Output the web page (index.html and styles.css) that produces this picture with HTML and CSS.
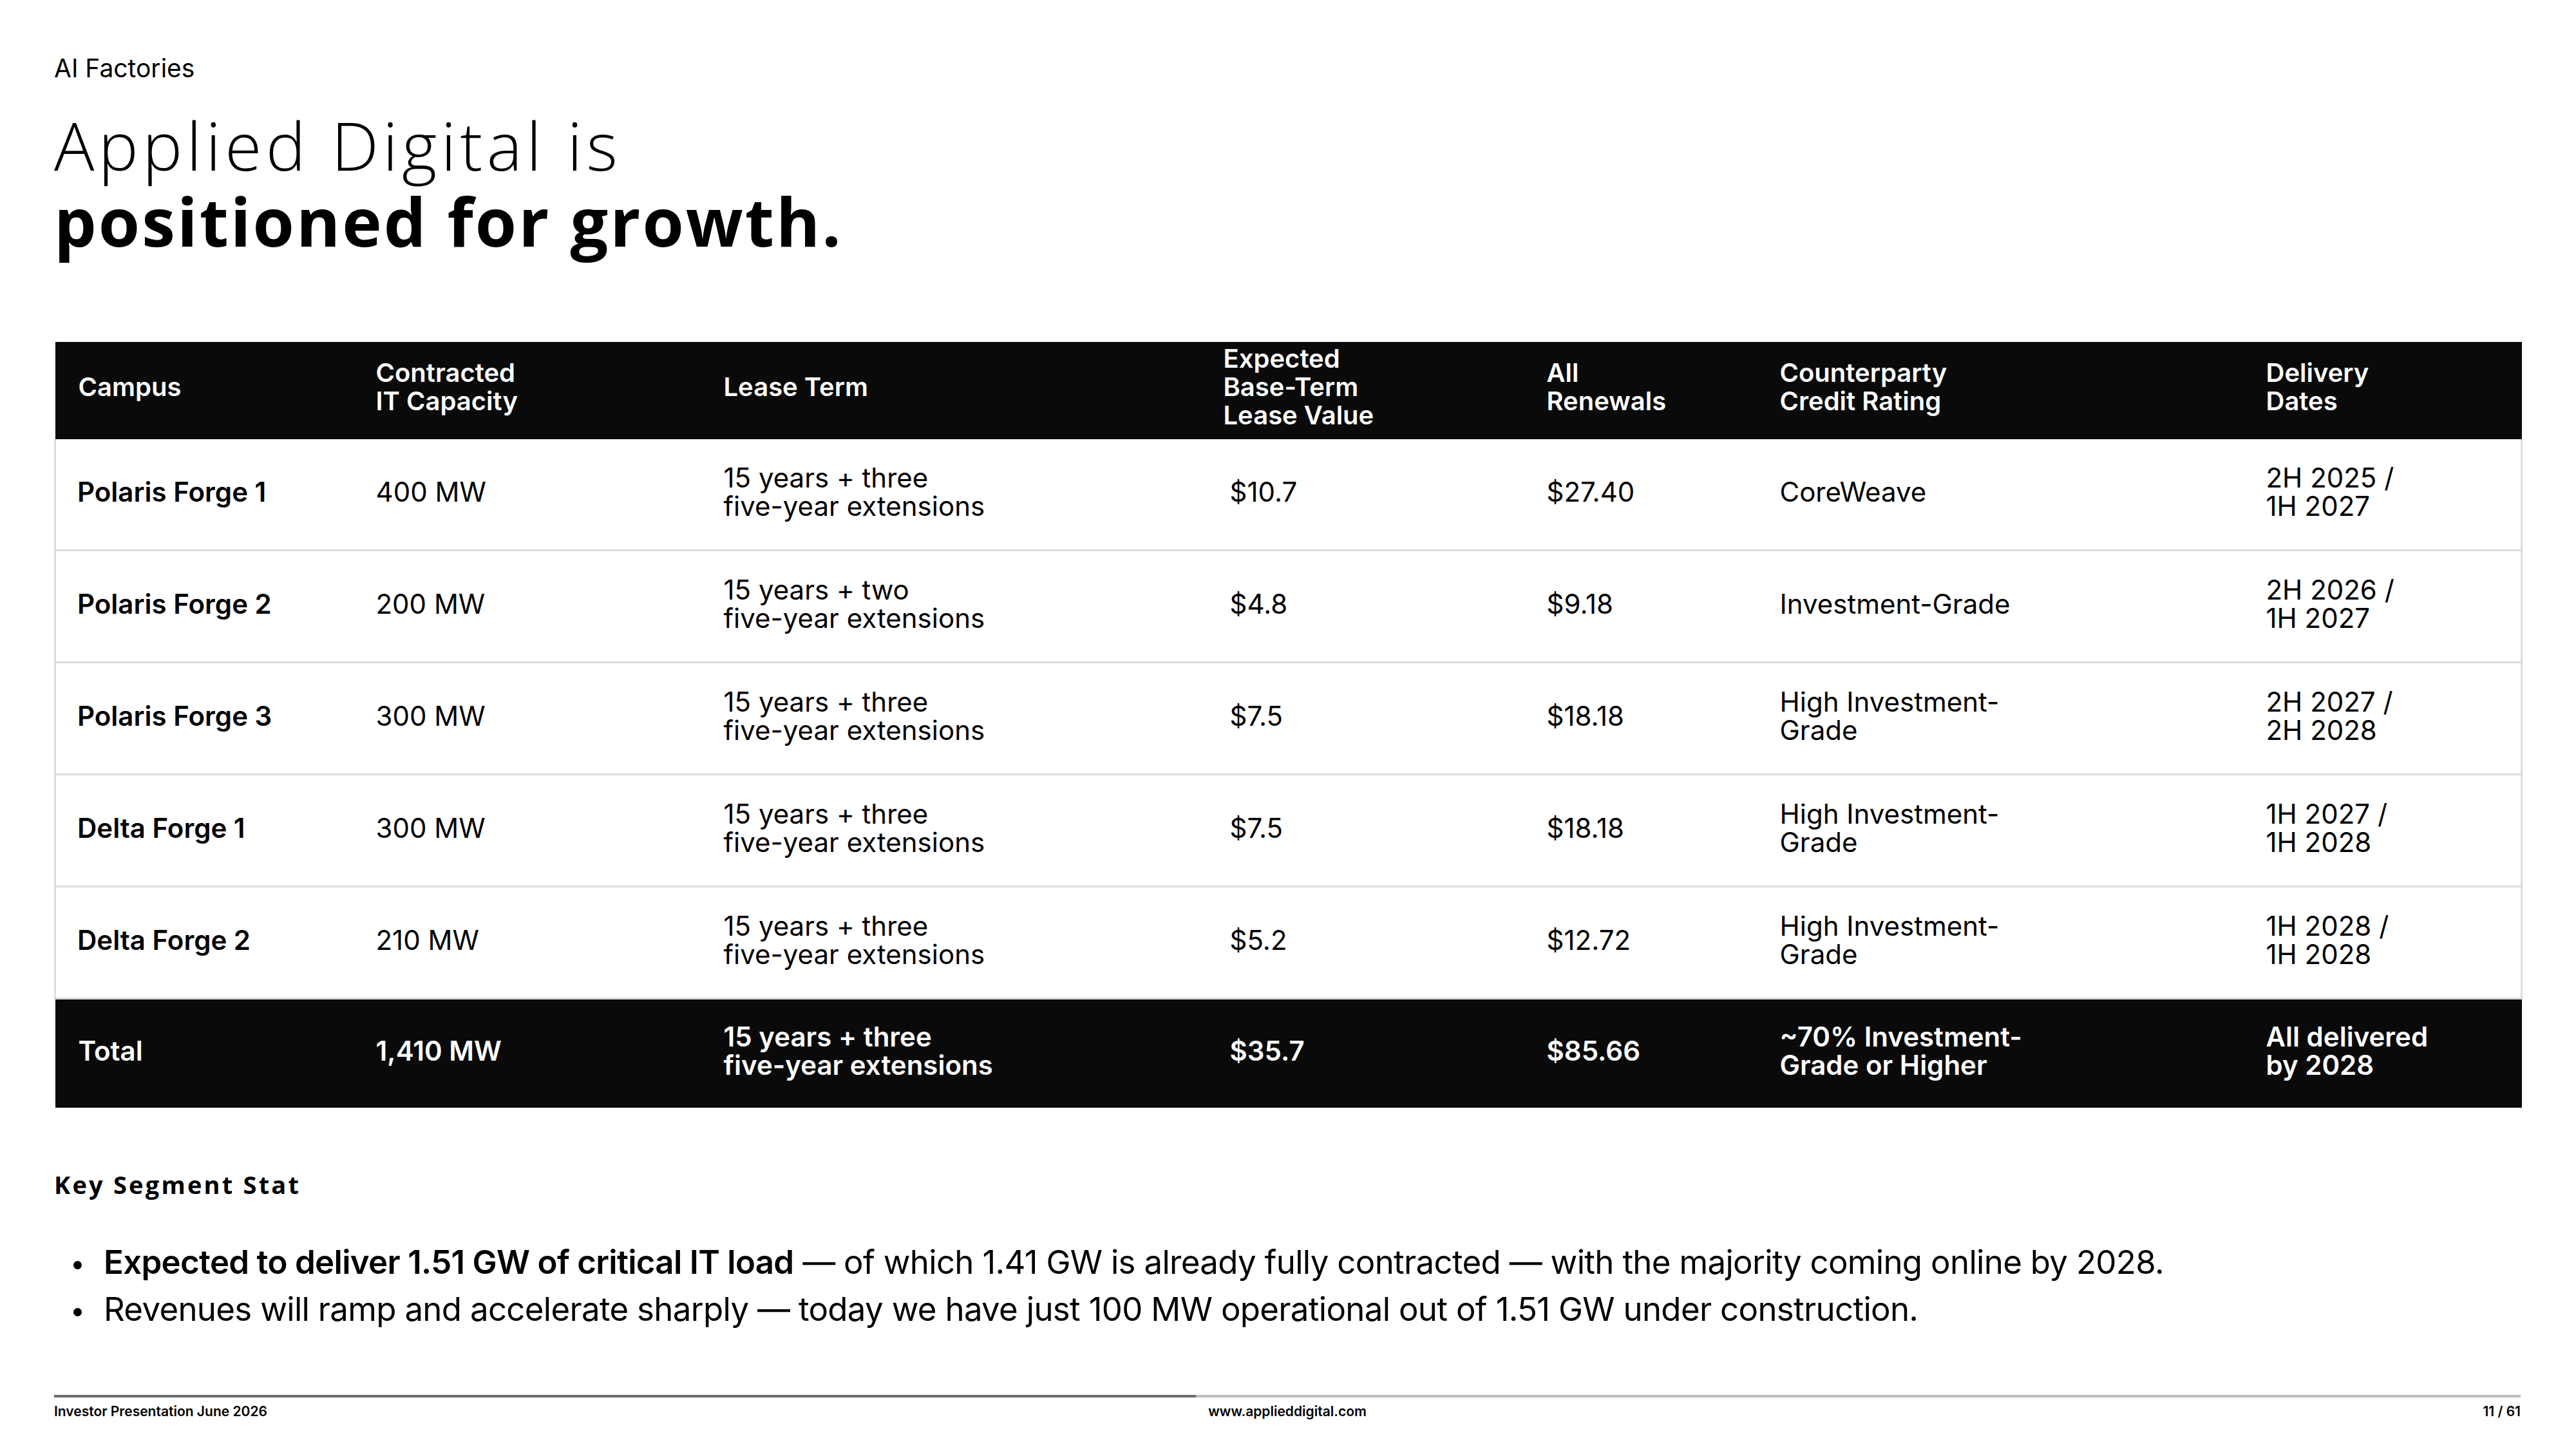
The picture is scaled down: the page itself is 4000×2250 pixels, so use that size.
FILE: index.html
```html
<!DOCTYPE html>
<html lang="en">
<head>
<meta charset="utf-8">
<title>Applied Digital is positioned for growth.</title>
<link rel="stylesheet" href="styles.css">
</head>
<body>
<div class="slide">
  <div class="kicker">AI Factories</div>
  <h1 class="title"><span class="line light">Applied Digital is</span><span class="line bold">positioned for growth.</span></h1>

  <table class="grid">
    <colgroup>
      <col class="c1"><col class="c2"><col class="c3"><col class="c4"><col class="c5"><col class="c6"><col class="c7">
    </colgroup>
    <thead>
      <tr>
        <th>Campus</th>
        <th>Contracted<br>IT Capacity</th>
        <th>Lease Term</th>
        <th>Expected<br>Base-Term<br>Lease Value</th>
        <th>All<br>Renewals</th>
        <th>Counterparty<br>Credit Rating</th>
        <th>Delivery<br>Dates</th>
      </tr>
    </thead>
    <tbody>
      <tr>
        <td class="name">Polaris Forge 1</td>
        <td>400 MW</td>
        <td>15 years + three<br>five-year extensions</td>
        <td class="val">$10.7</td>
        <td>$27.40</td>
        <td>CoreWeave</td>
        <td>2H 2025 /<br>1H 2027</td>
      </tr>
      <tr>
        <td class="name">Polaris Forge 2</td>
        <td>200 MW</td>
        <td>15 years + two<br>five-year extensions</td>
        <td class="val">$4.8</td>
        <td>$9.18</td>
        <td>Investment-Grade</td>
        <td>2H 2026 /<br>1H 2027</td>
      </tr>
      <tr>
        <td class="name">Polaris Forge 3</td>
        <td>300 MW</td>
        <td>15 years + three<br>five-year extensions</td>
        <td class="val">$7.5</td>
        <td>$18.18</td>
        <td>High Investment-<br>Grade</td>
        <td>2H 2027 /<br>2H 2028</td>
      </tr>
      <tr>
        <td class="name">Delta Forge 1</td>
        <td>300 MW</td>
        <td>15 years + three<br>five-year extensions</td>
        <td class="val">$7.5</td>
        <td>$18.18</td>
        <td>High Investment-<br>Grade</td>
        <td>1H 2027 /<br>1H 2028</td>
      </tr>
      <tr>
        <td class="name">Delta Forge 2</td>
        <td>210 MW</td>
        <td>15 years + three<br>five-year extensions</td>
        <td class="val">$5.2</td>
        <td>$12.72</td>
        <td>High Investment-<br>Grade</td>
        <td>1H 2028 /<br>1H 2028</td>
      </tr>
    </tbody>
    <tfoot>
      <tr>
        <td>Total</td>
        <td>1,410 MW</td>
        <td>15 years + three<br>five-year extensions</td>
        <td class="val">$35.7</td>
        <td>$85.66</td>
        <td>~70% Investment-<br>Grade or Higher</td>
        <td>All delivered<br>by 2028</td>
      </tr>
    </tfoot>
  </table>

  <h2 class="section">Key Segment Stat</h2>
  <ul class="points">
    <li><strong>Expected to deliver 1.51 GW of critical IT load</strong> — of which 1.41 GW is already fully contracted — with the majority coming online by 2028.</li>
    <li>Revenues will ramp and accelerate sharply — today we have just 100 MW operational out of 1.51 GW under construction.</li>
  </ul>

  <footer class="foot">
    <div class="track"><div class="fill"></div></div>
    <div class="foot-row">
      <span class="f-left">Investor Presentation June 2026</span>
      <span class="f-mid">www.applieddigital.com</span>
      <span class="f-right">11 / 61</span>
    </div>
  </footer>
</div>
</body>
</html>
```

FILE: styles.css
```css
html, body {
  margin: 0;
  padding: 0;
  background: #ffffff;
}

body {
  font-family: Inter, "Liberation Sans", sans-serif;
  color: #000000;
}

.slide {
  width: 4000px;
  height: 2250px;
  box-sizing: border-box;
  padding: 83px 86px 0 84px;
  display: flex;
  flex-direction: column;
}

.kicker {
  font-size: 39px;
  line-height: 46px;
  font-weight: 400;
}

.title {
  margin: 37px 0 0 0;
  font-family: "Open Sans", sans-serif;
  font-size: 104px;
  line-height: 118px;
  font-weight: 400;
}

.title .line {
  display: block;
  height: 118px;
}

.title .light {
  font-weight: 300;
  letter-spacing: 6.4px;
}

.title .bold {
  font-weight: 700;
  letter-spacing: 3px;
}

.grid {
  margin-top: 129px;
  width: 3830px;
  border-collapse: collapse;
  table-layout: fixed;
}

.c1 { width: 462px; }
.c2 { width: 540px; }
.c3 { width: 776px; }
.c4 { width: 502px; }
.c5 { width: 362px; }
.c6 { width: 755px; }
.c7 { width: 433px; }

.grid th,
.grid td {
  text-align: left;
  vertical-align: middle;
  padding: 0 20px 8px 36px;
}

.grid thead th {
  background: #0a0a0a;
  color: #ffffff;
  height: 139px;
  padding-bottom: 12px;
  font-size: 40px;
  line-height: 44px;
  font-weight: 600;
}

.grid tbody td {
  height: 163px;
  font-size: 42px;
  line-height: 44px;
  font-weight: 400;
  border-bottom: 3px solid #dcdcdc;
}

.grid tbody td:first-child {
  border-left: 3px solid #dcdcdc;
  padding-left: 33px;
}

.grid tbody td:last-child {
  border-right: 3px solid #dcdcdc;
}

.grid tbody td.name {
  font-weight: 600;
}

.grid td.val {
  padding-left: 46px;
}

.grid tfoot td {
  background: #0a0a0a;
  color: #ffffff;
  height: 160px;
  font-size: 42px;
  line-height: 44px;
  font-weight: 600;
}

.section {
  margin: 94px 0 0 0;
  font-family: "Open Sans", sans-serif;
  font-size: 38px;
  line-height: 50px;
  font-weight: 700;
  letter-spacing: 3.2px;
}

.points {
  margin: 59px 0 0 0;
  padding-left: 77px;
  list-style: none;
  font-size: 51px;
  line-height: 73px;
  font-weight: 400;
  letter-spacing: -0.7px;
}

.points li::before {
  content: "";
  display: inline-block;
  width: 13px;
  height: 13px;
  border-radius: 50%;
  background: #000000;
  margin-left: -47px;
  margin-right: 34px;
  vertical-align: middle;
}

.points strong {
  font-weight: 600;
}

.foot {
  margin-top: auto;
  margin-bottom: 46px;
}

.track {
  height: 4px;
  background: #bdbdbd;
}

.fill {
  width: 1773px;
  height: 4px;
  background: #6b6b6b;
}

.foot-row {
  display: grid;
  grid-template-columns: 1fr auto 1fr;
  margin-top: 10px;
  font-size: 21px;
  line-height: 24px;
  font-weight: 600;
}

.f-right {
  text-align: right;
}
```
